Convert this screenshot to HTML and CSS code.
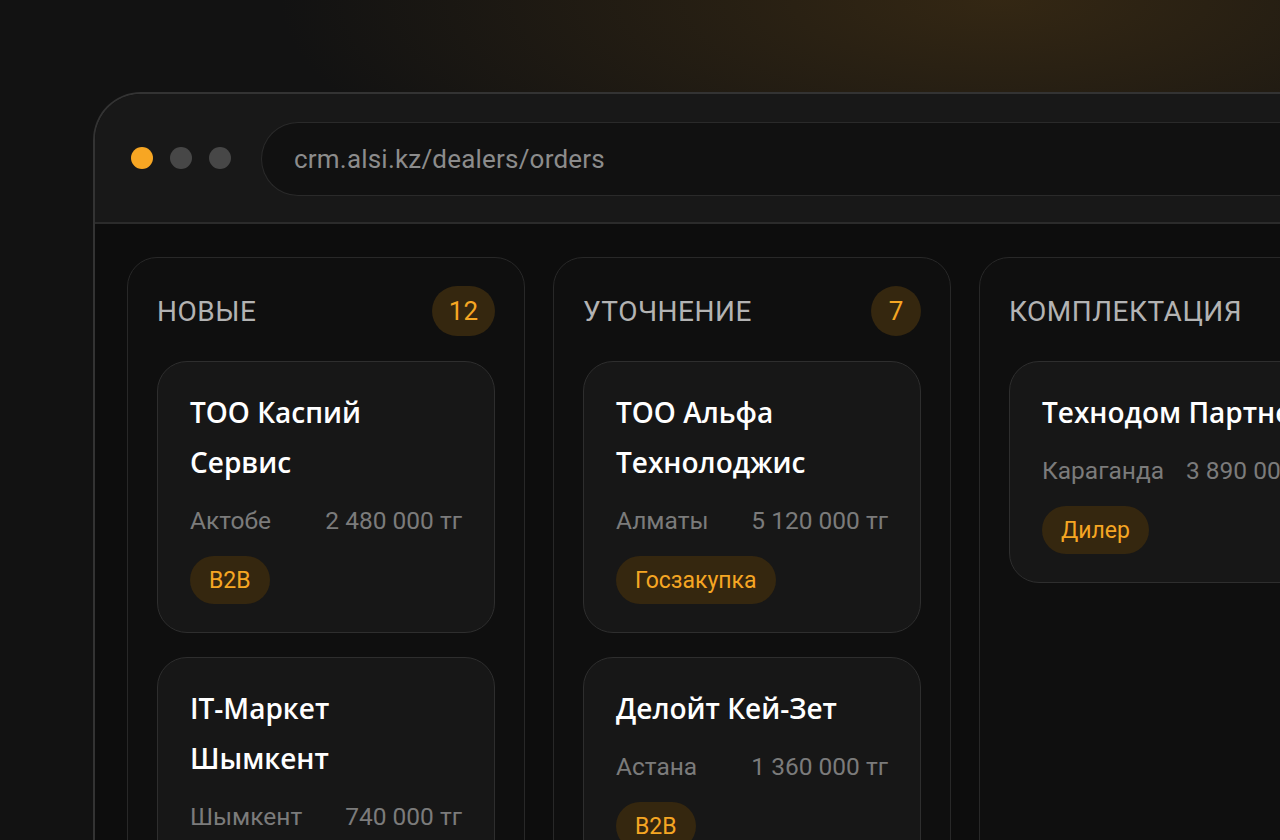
FILE: index.html
```html
<!DOCTYPE html>
<html lang="ru">
<head>
    <meta charset="UTF-8">
    <meta name="viewport" content="width=device-width, initial-scale=1.0">
    <title>ALSI CRM — заказы дилеров</title>
    <link rel="stylesheet" href="styles.css">
</head>
<body>
    <div class="window">
        <div class="toolbar">
            <div class="dots">
                <span class="dot dot-active"></span>
                <span class="dot"></span>
                <span class="dot"></span>
            </div>
            <div class="address">crm.alsi.kz/dealers/orders</div>
        </div>

        <div class="board">
            <div class="column">
                <div class="column-head">
                    <span class="column-title">Новые</span>
                    <span class="count">12</span>
                </div>
                <div class="card">
                    <div class="card-title">ТОО Каспий Сервис</div>
                    <div class="card-meta">
                        <span>Актобе</span>
                        <span>2 480 000 тг</span>
                    </div>
                    <span class="tag">B2B</span>
                </div>
                <div class="card">
                    <div class="card-title">IT-Маркет Шымкент</div>
                    <div class="card-meta">
                        <span>Шымкент</span>
                        <span>740 000 тг</span>
                    </div>
                    <span class="tag">B2B</span>
                </div>
            </div>

            <div class="column">
                <div class="column-head">
                    <span class="column-title">Уточнение</span>
                    <span class="count">7</span>
                </div>
                <div class="card">
                    <div class="card-title">ТОО Альфа Технолоджис</div>
                    <div class="card-meta">
                        <span>Алматы</span>
                        <span>5 120 000 тг</span>
                    </div>
                    <span class="tag">Госзакупка</span>
                </div>
                <div class="card">
                    <div class="card-title">Делойт Кей-Зет</div>
                    <div class="card-meta">
                        <span>Астана</span>
                        <span>1 360 000 тг</span>
                    </div>
                    <span class="tag">B2B</span>
                </div>
            </div>

            <div class="column">
                <div class="column-head">
                    <span class="column-title">Комплектация</span>
                    <span class="count">4</span>
                </div>
                <div class="card">
                    <div class="card-title nowrap">Технодом Партнерс</div>
                    <div class="card-meta">
                        <span>Караганда</span>
                        <span>3 890 000 тг</span>
                    </div>
                    <span class="tag">Дилер</span>
                </div>
            </div>
        </div>
    </div>
</body>
</html>
```

FILE: styles.css
```css
* {
    margin: 0;
    padding: 0;
    box-sizing: border-box;
}

body {
    width: 1280px;
    height: 840px;
    overflow: hidden;
    background-color: #121212;
    background-image: radial-gradient(ellipse 720px 240px at 1000px 0px, rgba(66, 48, 20, 0.7), rgba(66, 48, 20, 0) 100%);
    font-family: Roboto, "Liberation Sans", sans-serif;
    padding: 92px 0 0 93px;
}

.window {
    width: 1320px;
    height: 900px;
    border: 2px solid #333333;
    border-right: none;
    border-bottom: none;
    border-radius: 48px 0 0 0;
    background-color: #0d0d0d;
    overflow: hidden;
}

.toolbar {
    display: flex;
    align-items: center;
    gap: 30px;
    height: 130px;
    padding: 0 0 0 36px;
    background-color: #181818;
    border-bottom: 2px solid #2b2b2b;
}

.dots {
    display: flex;
    gap: 17px;
}

.dot {
    width: 22px;
    height: 22px;
    border-radius: 50%;
    background-color: #474747;
}

.dot-active {
    background-color: #f7a623;
}

.address {
    flex: 1;
    height: 74px;
    margin-top: 2px;
    padding-left: 32px;
    display: flex;
    align-items: center;
    background-color: #111111;
    border: 1px solid #2a2a2a;
    border-right: none;
    border-radius: 37px 0 0 37px;
    color: #8c8c8c;
    font-size: 26px;
    letter-spacing: 0.2px;
}

.board {
    display: flex;
    gap: 28px;
    padding: 33px 0 0 32px;
}

.column {
    flex: 0 0 398px;
    height: 700px;
    display: flex;
    flex-direction: column;
    gap: 24px;
    padding: 28px 29px;
    background-color: #0f0f0f;
    border: 1px solid #282828;
    border-radius: 30px;
}

.column-head {
    display: flex;
    align-items: center;
    justify-content: space-between;
    height: 50px;
    margin-bottom: 1px;
}

.column-title {
    color: #b3b3b3;
    font-size: 28px;
    letter-spacing: 0.5px;
    text-transform: uppercase;
}

.count {
    min-width: 50px;
    height: 50px;
    padding: 0 17px;
    border-radius: 25px;
    display: flex;
    align-items: center;
    justify-content: center;
    background-color: #35270f;
    color: #f5a623;
    font-size: 26px;
}

.card {
    display: flex;
    flex-direction: column;
    align-items: flex-start;
    gap: 20px;
    padding: 25px 32px 28px;
    background-color: #171717;
    border: 1px solid #2e2e2e;
    border-radius: 30px;
}

.card-title {
    color: #ffffff;
    font-family: "Open Sans", "Noto Sans", sans-serif;
    font-weight: 600;
    font-size: 28px;
    line-height: 50px;
}

.nowrap {
    white-space: nowrap;
}

.card-meta {
    align-self: stretch;
    display: flex;
    justify-content: space-between;
    gap: 18px;
    margin-bottom: 1px;
    color: #7b7b7b;
    font-size: 24.5px;
    line-height: 28px;
    white-space: nowrap;
}

.tag {
    height: 48px;
    padding: 0 19px;
    border-radius: 24px;
    display: flex;
    align-items: center;
    background-color: #35270f;
    color: #f5a623;
    font-size: 23px;
}
```
